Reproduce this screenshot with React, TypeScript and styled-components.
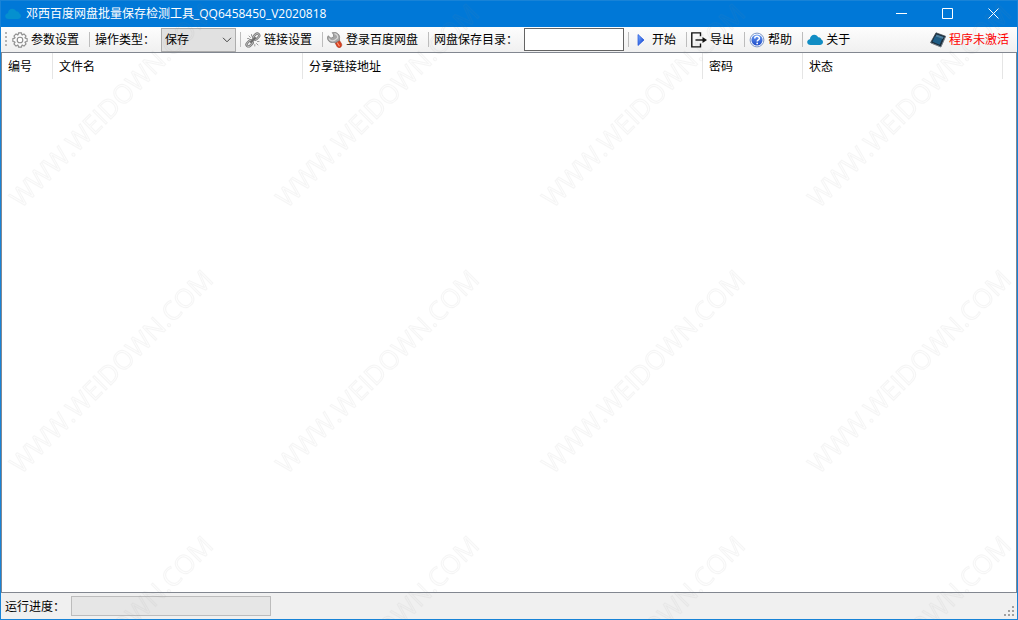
import React from 'react';
import styled, { createGlobalStyle } from 'styled-components';

const GlobalStyle = createGlobalStyle`
  *, *::before, *::after { box-sizing: border-box; }
  body {
    margin: 0;
    font: 12px/16px "Open Sans", "Noto Sans CJK SC", sans-serif;
    color: #000;
  }
  button, input, select { font: inherit; color: inherit; }
`;

const Window = styled.div`
  position: relative;
  display: flex;
  flex-direction: column;
  min-height: 100vh;
  border: 1px solid #1883d7;
  background: #fff;
`;

const TitleBar = styled.header`
  display: flex;
  align-items: center;
  height: 26px;
  padding-left: 4px;
  gap: 5px;
  background: #0078d7;
  color: #fff;
`;

const Title = styled.h1`
  flex: 1;
  margin: 0;
  font-size: 12px;
  font-weight: 400;
  white-space: nowrap;
`;

const WindowControls = styled.div`
  display: flex;
  align-self: stretch;
`;

const WindowButton = styled.button`
  display: flex;
  align-items: center;
  justify-content: center;
  width: 46px;
  padding: 0 1px 2px 0;
  border: 0;
  background: transparent;
`;

const Toolbar = styled.div`
  display: flex;
  align-items: center;
  height: 25px;
  padding-left: 4px;
  background: linear-gradient(#fdfdfd, #f0f0f0);
  white-space: nowrap;
`;

const Separator = styled.span`
  flex: none;
  width: 1px;
  height: 15px;
  background: #bdbdbd;
`;

const ToolButton = styled.button<{ $alert?: boolean }>`
  display: flex;
  align-items: center;
  gap: 3px;
  height: 24px;
  margin: 0 0 0 ${(p) => (p.$alert ? 'auto' : '0')};
  padding: 0 ${(p) => (p.$alert ? '8px' : '10px')} 0 4px;
  border: 0;
  background: transparent;
  color: ${(p) => (p.$alert ? '#f00' : '#000')};
`;

const FieldLabel = styled.label`
  padding: 0 6px 0 5px;
`;

const SelectBox = styled.div`
  display: grid;
  align-items: center;
  width: 75px;
  height: 24px;
  margin-right: 4px;

  & > * { grid-area: 1 / 1; }
  & > svg { justify-self: end; margin-right: 4px; pointer-events: none; }
`;

const Select = styled.select`
  appearance: none;
  width: 100%;
  height: 24px;
  padding: 0 16px 0 3px;
  border: 1px solid #adadad;
  border-radius: 0;
  background: #e1e1e1;
`;

const TextField = styled.input`
  width: 100px;
  height: 23px;
  margin-right: 4px;
  padding: 0 3px;
  border: 1px solid #646464;
  background: #fff;
`;

const ListView = styled.main`
  flex: 1;
  border: 1px solid #828790;
  background: #fff;
`;

const Table = styled.table`
  table-layout: fixed;
  width: 1001px;
  max-width: 100%;
  border-collapse: separate;
  border-spacing: 0;
`;

const HeaderCell = styled.th<{ $width: number }>`
  width: ${(p) => p.$width}px;
  height: 26px;
  padding: 2px 6px 0;
  border-right: 1px solid #e5e5e5;
  font-weight: 400;
  text-align: left;
  white-space: nowrap;
`;

const StatusBar = styled.footer`
  display: flex;
  align-items: center;
  height: 26px;
  padding-left: 4px;
  background: #f0f0f0;
`;

const StatusLabel = styled.span`
  padding: 2px 6px 0 0;
`;

const ProgressTrack = styled.div`
  width: 200px;
  height: 20px;
  border: 1px solid #bcbcbc;
  background: #e6e6e6;
`;

const GripIcon = styled.svg`
  align-self: flex-end;
  margin: 0 3px 3px auto;
`;

const Watermark = styled.svg`
  position: absolute;
  top: -1px;
  left: -1px;
  width: calc(100% + 2px);
  height: calc(100% + 2px);
  pointer-events: none;
`;

const Icon = ({ children }: { children: React.ReactNode }) => (
  <svg width="16" height="16" viewBox="0 0 16 16" aria-hidden="true">
    {children}
  </svg>
);

const CloudIcon = ({ color }: { color: string }) => (
  <Icon>
    <path
      d="M3.6 13C1.500 13 .2 11.900.2 10.100c0-1.600 1.200-2.700 2.700-2.900C3.200 4.400 5 2.800 7.300 2.800c1.800 0 3.200 1 3.800 2.500 1.700-.3 3 .7 3.200 2.300 1.100.4 1.700 1.300 1.700 2.500 0 1.700-1.300 2.900-3.200 2.900z"
      fill={color}
    />
  </Icon>
);

const gearPoints = Array.from({ length: 8 }, (_, i) => {
  const tooth: [number, number][] = [[5.5, -20], [7.3, -12], [7.3, 12], [5.5, 20]];
  return tooth
    .map(([r, offset]) => {
      const a = ((i * 45 + offset) * Math.PI) / 180;
      return `${(8 + r * Math.cos(a)).toFixed(2)},${(8 + r * Math.sin(a)).toFixed(2)}`;
    })
    .join(' ');
}).join(' ');

const GearIcon = () => (
  <Icon>
    <polygon points={gearPoints} fill="#fafafa" stroke="#8c8c8c" strokeWidth="1.100" strokeLinejoin="round" />
    <circle cx="8" cy="8" r="2.8" fill="#fff" stroke="#8c8c8c" strokeWidth="1.100" />
  </Icon>
);

const ChainIcon = () => (
  <Icon>
    <g fill="none" strokeLinecap="round">
      <g stroke="#727272" strokeWidth="2.400">
        <rect x="7.800" y="2.600" width="6.800" height="4" rx="2" transform="rotate(-45 11.200 4.600)" />
        <rect x="1.200" y="9.400" width="6.800" height="4" rx="2" transform="rotate(-45 4.600 11.400)" />
      </g>
      <g stroke="#b9b9b9" strokeWidth="1">
        <rect x="7.800" y="2.600" width="6.800" height="4" rx="2" transform="rotate(-45 11.200 4.600)" />
        <rect x="1.200" y="9.400" width="6.800" height="4" rx="2" transform="rotate(-45 4.600 11.400)" />
      </g>
      <path d="M6 10l4-4" stroke="#6a6a6a" strokeWidth="2" />
      <path d="M4 4l1.500 1.500M6.500 2.500v1.500M2.500 6.500H4M11.500 11.500l1.500 1.500M9.800 12.500V14M12.500 9.500H14" stroke="#9c9c9c" strokeWidth="1" />
    </g>
  </Icon>
);

const WrenchIcon = () => (
  <Icon>
    <path d="M8 10.800l4.300-2.600 2.100 3.300c.9 1.700.2 3.200-1.200 3.900-1.300.6-2.600.1-3.300-1.100z" fill="#d8401f" stroke="#a02c16" strokeWidth=".5" />
    <path d="M10.500 11l1.700 2.800" stroke="#ff9a78" strokeWidth="1.200" strokeLinecap="round" />
    <path
      d="M5.200.7C8.900-.4 12.600 1.800 12.600 5.400c0 1.200-.4 1.900.1 2.900l-4.500 2.700c-.8-.7-1.500-.6-2.500-.5C3 10.900.5 8.700.5 6c0-.8.2-1.500.6-2.200l2.900 2.400 2.700-1.400-.4-2.700z"
      fill="#a6a6a6"
      stroke="#777"
      strokeWidth=".7"
      strokeLinejoin="round"
    />
    <path d="M7.500 1.600c2.300.5 3.400 2.100 3.100 4.300L8 8.100C5.500 9.300 3 8.600 1.900 6.500" fill="none" stroke="#d9d9d9" strokeWidth="1.200" />
  </Icon>
);

const PlayIcon = () => (
  <Icon>
    <defs>
      <linearGradient id="play" x2="1" y2="1">
        <stop offset="0" stopColor="#7db0ff" />
        <stop offset="1" stopColor="#0a3bd0" />
      </linearGradient>
    </defs>
    <path d="M5 2.500l6 5.500-6 5.500z" fill="url(#play)" stroke="#1c50d8" strokeWidth=".7" strokeLinejoin="round" />
  </Icon>
);

const ExportIcon = () => (
  <Icon>
    <path d="M9.500 4.200V.9H.8v14h8.700v-3.300" fill="none" stroke="#111" strokeWidth="1.400" />
    <path d="M4.500 8h8" stroke="#111" strokeWidth="1.400" />
    <path d="M11.500 5L16 8l-4.500 3z" fill="#111" />
  </Icon>
);

const HelpIcon = () => (
  <Icon>
    <defs>
      <linearGradient id="help" x2="0" y2="1">
        <stop offset="0" stopColor="#6a9cf2" />
        <stop offset="1" stopColor="#1b49c8" />
      </linearGradient>
    </defs>
    <circle cx="8" cy="8" r="6.900" fill="#fff" stroke="#6d8ac0" strokeWidth=".9" />
    <circle cx="8" cy="8" r="5.600" fill="url(#help)" />
    <path d="M5.700 6.500C5.700 3.500 10.500 3.600 10.400 6.400c0 1.400-2.200 1.500-2.200 3.100" fill="none" stroke="#fff" strokeWidth="1.500" />
    <circle cx="8.200" cy="11.400" r=".9" fill="#fff" />
  </Icon>
);

const BookIcon = () => (
  <Icon>
    <path d="M6 .8l9.500 3.400-4.700 10.600L.6 10.600z" fill="#1c2d3b" stroke="#3a4650" strokeWidth=".7" strokeLinejoin="round" />
    <path d="M5 4.200l7.200 2.500-2.500 6-7.200-3z" fill="#1f5d86" />
    <path d="M6.500 2.400l7.200 2.600-1 1.900-7.200-2.500z" fill="#4d7f9f" />
    <path d="M1 11l9.900 4 4.500-10" fill="none" stroke="#75828c" strokeWidth=".8" />
  </Icon>
);

const Glyph = ({ d }: { d: string }) => (
  <svg width="11" height="11" viewBox="0 0 11 11" fill="none" stroke="#fff" aria-hidden="true">
    <path d={d} />
  </svg>
);

const columns = [
  { title: '编号', width: 51 },
  { title: '文件名', width: 250 },
  { title: '分享链接地址', width: 400 },
  { title: '密码', width: 100 },
  { title: '状态', width: 200 },
];

const gripDots = [[8, 0], [4, 4], [8, 4], [0, 8], [4, 8], [8, 8]];

export default function App() {
  return (
    <Window>
      <GlobalStyle />
      <TitleBar>
        <CloudIcon color="#0590cf" />
        <Title>邓西百度网盘批量保存检测工具_QQ6458450_V2020818</Title>
        <WindowControls>
          <WindowButton aria-label="最小化"><Glyph d="M0 5.500h11" /></WindowButton>
          <WindowButton aria-label="最大化"><Glyph d="M.5.5h10v10H.5z" /></WindowButton>
          <WindowButton aria-label="关闭"><Glyph d="M.5.5l10 10M10.500.5l-10 10" /></WindowButton>
        </WindowControls>
      </TitleBar>

      <Toolbar role="toolbar">
        <svg width="3" height="15" viewBox="0 0 3 15" fill="#b4b4b4" aria-hidden="true">
          {[0, 4, 8, 12].map((y) => (
            <rect key={y} y={y} width="2" height="2" />
          ))}
        </svg>
        <ToolButton><GearIcon />参数设置</ToolButton>
        <Separator />
        <FieldLabel htmlFor="mode">操作类型：</FieldLabel>
        <SelectBox>
          <Select id="mode" defaultValue="save">
            <option value="save">保存</option>
            <option value="check">检测</option>
          </Select>
          <svg width="10" height="6" viewBox="0 0 10 6" fill="none" stroke="#444" aria-hidden="true">
            <path d="M1 .8l4 4 4-4" />
          </svg>
        </SelectBox>
        <Separator />
        <ToolButton><ChainIcon />链接设置</ToolButton>
        <Separator />
        <ToolButton><WrenchIcon />登录百度网盘</ToolButton>
        <Separator />
        <FieldLabel htmlFor="folder">网盘保存目录：</FieldLabel>
        <TextField id="folder" type="text" />
        <Separator />
        <ToolButton><PlayIcon />开始</ToolButton>
        <Separator />
        <ToolButton><ExportIcon />导出</ToolButton>
        <Separator />
        <ToolButton><HelpIcon />帮助</ToolButton>
        <Separator />
        <ToolButton><CloudIcon color="#118dc4" />关于</ToolButton>
        <ToolButton $alert><BookIcon />程序未激活</ToolButton>
      </Toolbar>

      <ListView>
        <Table>
          <thead>
            <tr>
              {columns.map((c) => (
                <HeaderCell key={c.title} $width={c.width} scope="col">{c.title}</HeaderCell>
              ))}
            </tr>
          </thead>
          <tbody />
        </Table>
      </ListView>

      <StatusBar>
        <StatusLabel id="progress-label">运行进度：</StatusLabel>
        <ProgressTrack role="progressbar" aria-labelledby="progress-label" aria-valuenow={0} />
        <GripIcon width="10" height="10" viewBox="0 0 10 10" fill="#a0a0a0" aria-hidden="true">
          {gripDots.map(([x, y]) => (
            <rect key={`${x}-${y}`} x={x} y={y} width="2" height="2" />
          ))}
        </GripIcon>
      </StatusBar>

      <Watermark aria-hidden="true">
        <defs>
          <pattern id="watermark" width="266" height="266" patternUnits="userSpaceOnUse">
            <text
              transform="translate(21 209) rotate(-45)"
              fontFamily="Open Sans, sans-serif"
              fontSize="26"
              fill="#808080"
              fillOpacity=".01"
              stroke="#808080"
              strokeOpacity=".07"
            >
              WWW.WEIDOWN.COM
            </text>
          </pattern>
        </defs>
        <rect width="100%" height="100%" fill="url(#watermark)" />
      </Watermark>
    </Window>
  );
}
